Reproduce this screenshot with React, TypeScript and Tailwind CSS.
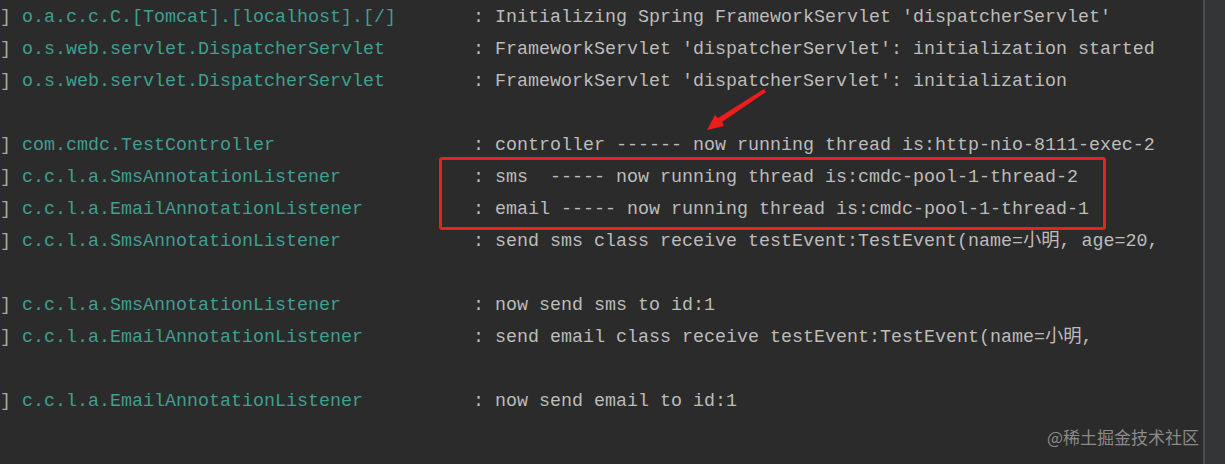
import React from "react";

type Line = { logger: string; msg: string } | null;

const lines: Line[] = [
  { logger: "o.a.c.c.C.[Tomcat].[localhost].[/]", msg: "Initializing Spring FrameworkServlet 'dispatcherServlet'" },
  { logger: "o.s.web.servlet.DispatcherServlet", msg: "FrameworkServlet 'dispatcherServlet': initialization started" },
  { logger: "o.s.web.servlet.DispatcherServlet", msg: "FrameworkServlet 'dispatcherServlet': initialization" },
  null,
  { logger: "com.cmdc.TestController", msg: "controller ------ now running thread is:http-nio-8111-exec-2" },
  { logger: "c.c.l.a.SmsAnnotationListener", msg: "sms  ----- now running thread is:cmdc-pool-1-thread-2" },
  { logger: "c.c.l.a.EmailAnnotationListener", msg: "email ----- now running thread is:cmdc-pool-1-thread-1" },
  { logger: "c.c.l.a.SmsAnnotationListener", msg: "send sms class receive testEvent:TestEvent(name=小明, age=20," },
  null,
  { logger: "c.c.l.a.SmsAnnotationListener", msg: "now send sms to id:1" },
  { logger: "c.c.l.a.EmailAnnotationListener", msg: "send email class receive testEvent:TestEvent(name=小明," },
  null,
  { logger: "c.c.l.a.EmailAnnotationListener", msg: "now send email to id:1" },
];

export default function App() {
  return (
    <div className="relative flex h-[464px] w-[1225px] overflow-hidden bg-[#2b2b2b]">
      <div
        className="flex-1 whitespace-pre pt-[2px] text-[18.33px] leading-[32px]"
        style={{ fontFamily: '"Liberation Mono", "Noto Sans CJK SC", monospace' }}
      >
        {lines.map((l, i) =>
          l ? (
            <div key={i} className="h-[32px]">
              <span className="text-[#a8a8a8]">{"] "}</span>
              <span className="text-[#3f9f90]">{l.logger.padEnd(41, " ")}</span>
              <span className="text-[#bcbcbc]">{": " + l.msg}</span>
            </div>
          ) : (
            <div key={i} className="h-[32px]" />
          )
        )}
      </div>
      <div className="w-[22px] border-l-[2px] border-[#4a4c4e] bg-[#333537]" />

      {/* red highlight box */}
      <div className="absolute left-[439px] top-[157px] h-[73px] w-[667px] rounded-[3px] border-[3px] border-[#e8221c]" />

      {/* red arrow */}
      <svg className="absolute left-[700px] top-[84px]" width="72" height="52" viewBox="0 0 72 52">
        <path d="M64 5 L66 8 L22 38 L24 42 L7 46 L15 31 L18 34 Z" fill="#ee1c1c" />
      </svg>

      {/* watermark */}
      <div
        className="absolute left-[1047px] top-[424px] text-[17px] leading-[26px] text-[#8a8a8a]"
        style={{ fontFamily: '"Noto Sans CJK SC", "Noto Sans", sans-serif' }}
      >
        @稀土掘金技术社区
      </div>
    </div>
  );
}
